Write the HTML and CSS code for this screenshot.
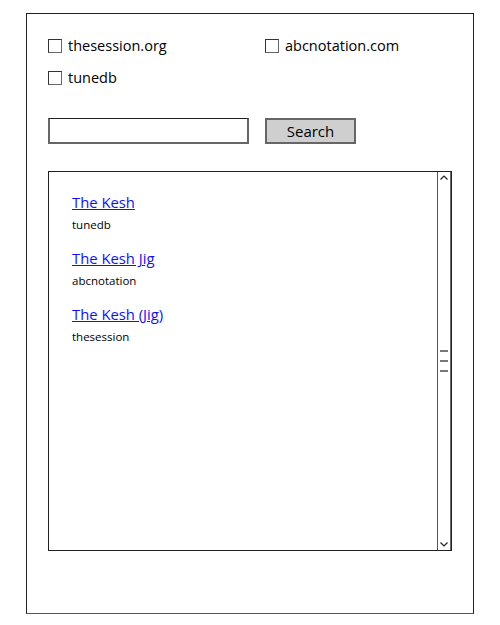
FILE: index.html
```html
<!DOCTYPE html>
<html>
<head>
<meta charset="utf-8">
<link rel="stylesheet" href="styles.css">
</head>
<body>
<div class="frame">
  <div class="sources">
    <label class="opt"><span class="box"></span><span class="opt-text">thesession.org</span></label>
    <label class="opt"><span class="box"></span><span class="opt-text">abcnotation.com</span></label>
    <label class="opt"><span class="box"></span><span class="opt-text">tunedb</span></label>
  </div>
  <div class="search-row">
    <div class="input"></div>
    <div class="button">Search</div>
  </div>
  <div class="list">
    <div class="results">
      <div class="item"><a class="link">The Kesh</a><div class="src">tunedb</div></div>
      <div class="item"><a class="link">The Kesh Jig</a><div class="src">abcnotation</div></div>
      <div class="item"><a class="link">The Kesh (Jig)</a><div class="src">thesession</div></div>
    </div>
    <div class="scrollbar">
      <svg class="arrow" width="12" height="12" viewBox="0 0 12 12"><path d="M2.5 7.5 L6 4 L9.5 7.5" fill="none" stroke="#222" stroke-width="1.2"/></svg>
      <div class="grip"><span></span><span></span><span></span></div>
      <svg class="arrow" width="12" height="12" viewBox="0 0 12 12"><path d="M2.5 4.5 L6 8 L9.5 4.5" fill="none" stroke="#222" stroke-width="1.2"/></svg>
    </div>
  </div>
</div>
</body>
</html>
```
FILE: styles.css
```css
html, body {
  margin: 0;
  padding: 0;
  background: #fff;
}
body {
  font-family: "Comic Sans MS", "Open Sans", sans-serif;
  color: #111;
}
.frame {
  box-sizing: border-box;
  margin: 13px 0 0 26px;
  width: 448px;
  height: 601px;
  border: 1px solid #222;
  border-bottom-color: #555;
  padding: 22px 0 0 21px;
}
.sources {
  display: grid;
  grid-template-columns: 217px 190px;
  row-gap: 12px;
}
.opt {
  display: flex;
  align-items: center;
  height: 20px;
  gap: 6px;
}
.box {
  box-sizing: border-box;
  width: 14px;
  height: 14px;
  border: 1px solid #333;
  border-right-color: #666;
  border-bottom-color: #666;
}
.opt-text {
  font-size: 14.5px;
  line-height: 20px;
  color: #000;
}
.search-row {
  display: flex;
  gap: 16px;
  margin-top: 30px;
}
.input {
  box-sizing: border-box;
  width: 201px;
  height: 26px;
  border: 2px solid #666;
  border-top-color: #222;
  border-top-width: 1px;
  background: #fff;
}
.button {
  box-sizing: border-box;
  width: 91px;
  height: 26px;
  border: 2px solid #666;
  background: #cfcfcf;
  font-size: 15px;
  line-height: 22px;
  text-align: center;
  color: #000;
}
.list {
  box-sizing: border-box;
  margin-top: 27px;
  width: 404px;
  height: 380px;
  border: 1px solid #222;
  display: flex;
}
.results {
  flex: 1;
  padding: 20px 0 0 23px;
  display: flex;
  flex-direction: column;
  gap: 14px;
}
.item {
  display: flex;
  flex-direction: column;
}
.link {
  color: #1010ff;
  text-decoration: underline;
  font-size: 14.8px;
  line-height: 20px;
}
.src {
  font-size: 11.5px;
  line-height: 18px;
  color: #000;
  margin-top: 4px;
}
.scrollbar {
  box-sizing: border-box;
  width: 14px;
  border-left: 1px solid #555;
  border-right: 1px solid #666;
  display: flex;
  flex-direction: column;
  justify-content: space-between;
  align-items: center;
}
.arrow {
  display: block;
  flex: none;
}
.grip {
  display: flex;
  flex-direction: column;
  gap: 8px;
  align-items: center;
}
.grip span {
  display: block;
  width: 8px;
  height: 2px;
  background: #777;
}
```
